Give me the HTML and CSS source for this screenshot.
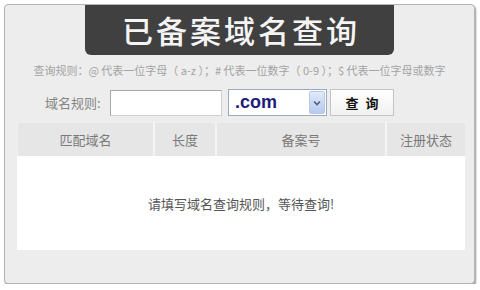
FILE: index.html
```html
<!DOCTYPE html>
<html lang="zh-CN">
<head>
<meta charset="utf-8">
<title>已备案域名查询</title>
<link rel="stylesheet" href="styles.css">
</head>
<body>
<div class="page">
  <div class="panel">
    <div class="title">已备案域名查询</div>
    <div class="rules">查询规则：@ 代表一位字母（ a-z ）；# 代表一位数字（ 0-9 ）；$ 代表一位字母或数字</div>
    <div class="form">
      <span class="label">域名规则:</span>
      <input class="input" type="text">
      <div class="select">
        <span class="select-text">.com</span>
        <span class="select-arrow">
          <svg width="8" height="6" viewBox="0 0 8 6"><path d="M1 1.5 L4 4.5 L7 1.5" fill="none" stroke="#4d6185" stroke-width="1.6"/></svg>
        </span>
      </div>
      <button class="btn" type="button">查 询</button>
    </div>
    <table class="result">
      <colgroup>
        <col class="w1"><col class="w2"><col class="w3"><col class="w4">
      </colgroup>
      <thead>
        <tr>
          <th class="first">匹配域名</th>
          <th>长度</th>
          <th>备案号</th>
          <th>注册状态</th>
        </tr>
      </thead>
      <tbody>
        <tr><td colspan="4" class="msg">请填写域名查询规则，等待查询!</td></tr>
      </tbody>
    </table>
  </div>
</div>
</body>
</html>
```
FILE: styles.css
```css
html, body {
  margin: 0;
  padding: 0;
  background: #ffffff;
}
.page {
  padding: 4px 5px 0 4px;
  font-family: "Noto Sans CJK SC", "Liberation Sans", sans-serif;
}
.panel {
  box-sizing: border-box;
  width: 471px;
  height: 280px;
  background: #ededed;
  border: 1px solid #b5b5b5;
  border-radius: 4px;
  box-shadow: 1px 2px 2px #9a9a9a;
  display: flex;
  flex-direction: column;
}
.title {
  width: 309px;
  height: 50px;
  margin: 0 auto;
  background: #404040;
  border-radius: 0 0 6px 6px;
  color: #f4f4f4;
  font-size: 31px;
  font-weight: 500;
  line-height: 50px;
  text-align: center;
  letter-spacing: 3px;
  text-indent: 3px;
}
.rules {
  margin-top: 8px;
  height: 15px;
  line-height: 15px;
  font-size: 11px;
  color: #a3a3a3;
  text-align: center;
  white-space: nowrap;
}
.form {
  margin-top: 11px;
  display: flex;
  align-items: center;
  padding-left: 40px;
  height: 27px;
}
.label {
  font-size: 13px;
  color: #858585;
  width: 58px;
  margin-right: 7px;
  white-space: nowrap;
}
.input {
  box-sizing: border-box;
  width: 112px;
  height: 26px;
  margin: 0 6px 0 0;
  padding: 0;
  border: 1px solid #a8a8a8;
  border-right-color: #cfcfcf;
  border-bottom-color: #cfcfcf;
  background: #fff;
}
.select {
  box-sizing: border-box;
  width: 99px;
  height: 27px;
  border: 1px solid #9aaac0;
  background: #fff;
  display: flex;
  align-items: stretch;
  margin-right: 3px;
}
.select-text {
  flex: 1;
  font-family: "Liberation Sans", sans-serif;
  font-size: 18px;
  font-weight: 700;
  color: #1d1d78;
  line-height: 25px;
  padding-left: 6px;
}
.select-arrow {
  box-sizing: border-box;
  width: 16px;
  margin: 1px;
  border: 1px solid #b9c8e6;
  border-radius: 2px;
  background: linear-gradient(#e2eaf9, #b7c9ee);
  display: flex;
  align-items: center;
  justify-content: center;
}
.btn {
  box-sizing: border-box;
  width: 64px;
  height: 27px;
  margin: 0;
  padding: 0;
  border: 1px solid #c4c4c4;
  background: linear-gradient(#ffffff, #f1f1f1);
  font-family: "Noto Sans CJK SC", sans-serif;
  font-size: 13px;
  font-weight: 700;
  color: #111;
  letter-spacing: 2px;
  text-indent: 2px;
}
.result {
  margin: 6px 0 0 12px;
  width: 448px;
  border-collapse: separate;
  border-spacing: 0;
  table-layout: fixed;
}
.w1 { width: 136px; }
.w2 { width: 62px; }
.w3 { width: 170px; }
.w4 { width: 80px; }
.result th {
  box-sizing: border-box;
  height: 34px;
  padding: 0;
  background: #e6e6e6;
  border-left: 2px solid #f4f4f4;
  border-top: 1px solid #f0f0f0;
  font-size: 13px;
  font-weight: 400;
  color: #7a7a7a;
}
.result th.first { border-left: 1px solid #f0f0f0; }
.result td.msg {
  height: 94px;
  padding: 0;
  background: #fff;
  text-align: center;
  font-size: 13px;
  color: #555;
}
```
